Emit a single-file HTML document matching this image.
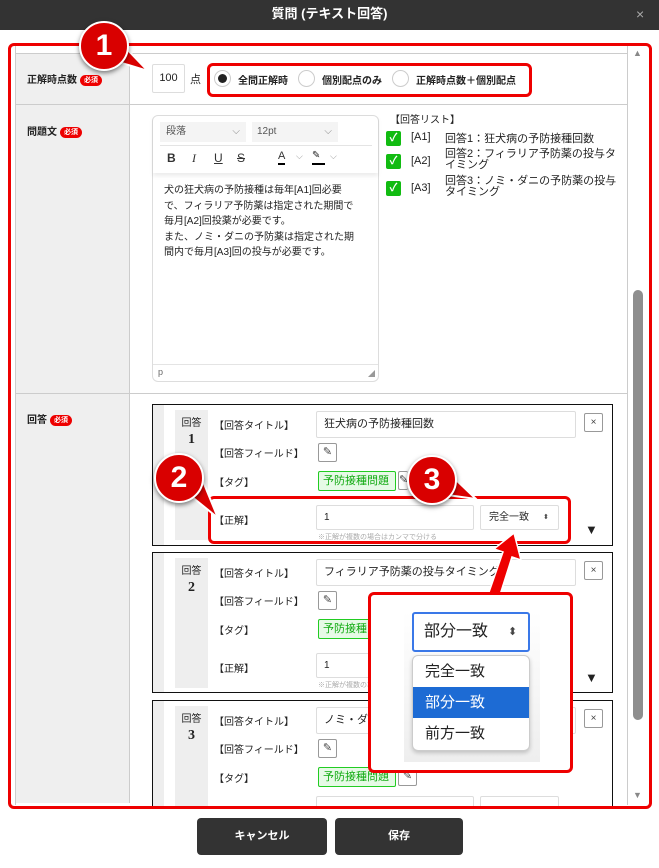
<!DOCTYPE html>
<html><head><meta charset="utf-8"><style>
*{box-sizing:border-box;margin:0;padding:0}
body{width:659px;height:868px;background:#fff;font-family:"Liberation Sans","Noto Sans CJK JP",sans-serif;color:#222;position:relative;overflow:hidden;font-size:11px}
.a{position:absolute}
.hdr{left:0;top:0;width:659px;height:30px;background:#333;color:#fff;font-weight:bold;font-size:13px;text-align:center;line-height:28px}
.lab{font-weight:bold;font-size:10px}
.req{display:inline-block;background:#e00;color:#fff;font-size:7px;border-radius:7px;padding:0 4px;line-height:11px;vertical-align:1px;margin-left:3px}
.rb{border:3px solid #e00;border-radius:6px}
.inp{border:1px solid #ddd;border-radius:2px;background:#fff}
.radio{width:17px;height:17px;border:1px solid #ccc;border-radius:50%;background:#fff}
.card{border:1.5px solid #111;background:#fff}
.pen{width:19px;height:19px;border:1px solid #999;border-radius:2px;background:#fff;font-size:11px;text-align:center;line-height:17px;color:#444}
.tag{border:1px solid #2c2;background:#e6fae6;color:#1a1;font-size:11px;border-radius:2px;padding:0 4px;line-height:18px}
.cb{width:15px;height:15px;background:#1b1;border-radius:2px;color:#fff;font-size:11px;font-weight:bold;text-align:center;line-height:15px}
.circ{width:50px;height:50px;border-radius:50%;background:#d90000;border:2px solid #fff;box-shadow:0 2px 5px rgba(0,0,0,.5);color:#fff;font-size:30px;font-weight:bold;text-align:center;line-height:46px}
.btn{background:#333;color:#fff;border-radius:4px;text-align:center;line-height:37px;font-size:11px;font-weight:bold}
</style></head><body>
<div class="a hdr">質問 (テキスト回答)</div>
<div class="a" style="left:636px;top:6px;color:#aaa;font-size:14px">×</div>

<div class="a" style="left:15px;top:53px;width:115px;height:750px;background:#efefef;border-right:1px solid #ccc"></div>
<div class="a" style="left:15px;top:53px;width:612px;height:1px;background:#ccc"></div>
<div class="a" style="left:15px;top:104px;width:612px;height:1px;background:#ccc"></div>
<div class="a" style="left:15px;top:393px;width:612px;height:1px;background:#ccc"></div>
<div class="a" style="left:15px;top:45px;width:1px;height:760px;background:#ccc"></div>
<div class="a" style="left:627px;top:45px;width:1px;height:760px;background:#ccc"></div>
<div class="a" style="left:629px;top:45px;width:16px;height:760px;background:#fff"></div>
<div class="a" style="left:633px;top:48px;color:#888;font-size:9px">▲</div>
<div class="a" style="left:633px;top:790px;color:#888;font-size:9px">▼</div>
<div class="a" style="left:633px;top:290px;width:10px;height:430px;background:#8e8e8e;border-radius:5px"></div>

<div class="a lab" style="left:27px;top:71px">正解時点数<span class="req">必須</span></div>
<div class="a inp" style="left:152px;top:64px;width:33px;height:29px;text-align:center;line-height:27px;font-size:11px">100</div>
<div class="a" style="left:190px;top:71px;font-size:11px">点</div>
<div class="a radio" style="left:214px;top:70px"><div style="width:9px;height:9px;border-radius:50%;background:#222;margin:3px"></div></div>
<div class="a lab" style="left:238px;top:72px;font-size:10px">全問正解時</div>
<div class="a radio" style="left:298px;top:70px"></div>
<div class="a lab" style="left:322px;top:72px;font-size:10px">個別配点のみ</div>
<div class="a radio" style="left:392px;top:70px"></div>
<div class="a lab" style="left:416px;top:72px;font-size:10px">正解時点数＋個別配点</div>
<div class="a rb" style="left:207px;top:63px;width:325px;height:34px"></div>

<div class="a lab" style="left:27px;top:123px">問題文<span class="req">必須</span></div>
<div class="a" style="left:152px;top:115px;width:227px;height:267px;border:1px solid #ddd;border-radius:6px;background:#fff"></div>
<div class="a" style="left:153px;top:116px;width:225px;height:57px;box-shadow:0 3px 4px rgba(0,0,0,.08)"></div>
<div class="a" style="left:160px;top:122px;width:86px;height:20px;background:#f4f4f4;color:#555;font-size:10px;line-height:20px;padding-left:6px">段落<span style="float:right;margin-right:6px;color:#888">⌵</span></div>
<div class="a" style="left:252px;top:122px;width:86px;height:20px;background:#f4f4f4;color:#555;font-size:10px;line-height:20px;padding-left:5px">12pt<span style="float:right;margin-right:6px;color:#888">⌵</span></div>
<div class="a" style="left:160px;top:145px;width:212px;height:1px;background:#e4e4e4"></div>
<div class="a" style="left:167px;top:151px;font-size:12px;font-weight:bold;color:#333">B</div>
<div class="a" style="left:192px;top:151px;font-size:12px;font-style:italic;font-family:'Liberation Serif',serif;color:#333">I</div>
<div class="a" style="left:214px;top:151px;font-size:12px;text-decoration:underline;color:#333">U</div>
<div class="a" style="left:237px;top:151px;font-size:12px;text-decoration:line-through;color:#333">S</div>
<div class="a" style="left:278px;top:150px;font-size:11px;color:#333;border-bottom:2px solid #000;line-height:13px">A</div>
<div class="a" style="left:296px;top:151px;font-size:9px;color:#999">⌵</div>
<div class="a" style="left:312px;top:150px;width:13px;height:15px;border-bottom:2px solid #000;font-size:10px;color:#222">✎</div>
<div class="a" style="left:330px;top:151px;font-size:9px;color:#999">⌵</div>
<div class="a" style="left:164px;top:183px;white-space:nowrap;font-size:10px;line-height:15.5px;color:#222">犬の狂犬病の予防接種は毎年[A1]回必要<br>で、フィラリア予防薬は指定された期間で<br>毎月[A2]回投薬が必要です。<br>また、ノミ・ダニの予防薬は指定された期<br>間内で毎月[A3]回の投与が必要です。</div>
<div class="a" style="left:153px;top:364px;width:225px;height:1px;background:#e4e4e4"></div>
<div class="a" style="left:158px;top:367px;font-size:9px;color:#666">p</div>
<div class="a" style="left:368px;top:369px;font-size:7px;color:#999">◢</div>

<div class="a" style="left:390px;top:111px;font-size:10px">【回答リスト】</div>
<div class="a cb" style="left:386px;top:131px">✓</div>
<div class="a" style="left:411px;top:131px;font-size:11px">[A1]</div>
<div class="a" style="left:445px;top:130px;font-size:11px">回答1：狂犬病の予防接種回数</div>
<div class="a cb" style="left:386px;top:154px">✓</div>
<div class="a" style="left:411px;top:155px;font-size:11px">[A2]</div>
<div class="a" style="left:445px;top:149px;font-size:11px;line-height:11px;width:172px">回答2：フィラリア予防薬の投与タイミング</div>
<div class="a cb" style="left:386px;top:181px">✓</div>
<div class="a" style="left:411px;top:182px;font-size:11px">[A3]</div>
<div class="a" style="left:445px;top:176px;font-size:11px;line-height:11px;width:172px">回答3：ノミ・ダニの予防薬の投与タイミング</div>

<div class="a lab" style="left:27px;top:411px">回答<span class="req">必須</span></div>

<div class="a card" style="left:152px;top:404px;width:461px;height:142px"><div style="position:absolute;left:0;top:0;width:11px;height:100%;background:#eee"></div></div>
<div class="a" style="left:175px;top:410px;width:33px;height:130px;background:#eee;text-align:center;font-size:10px;padding-top:4px">回答<div style="font-size:14px;font-weight:bold;margin-top:3px;font-family:'Liberation Serif',serif">1</div></div>
<div class="a" style="left:214px;top:417px;font-size:10px">【回答タイトル】</div>
<div class="a inp" style="left:316px;top:411px;width:260px;height:27px;font-size:11px;line-height:25px;padding-left:7px">狂犬病の予防接種回数</div>
<div class="a pen" style="left:584px;top:413px;font-size:10px">×</div>
<div class="a" style="left:214px;top:445px;font-size:10px">【回答フィールド】</div>
<div class="a pen" style="left:318px;top:443px">✎</div>
<div class="a" style="left:214px;top:474px;font-size:10px">【タグ】</div>
<div class="a tag" style="left:318px;top:471px;width:78px">予防接種問題</div>
<div class="a pen" style="left:398px;top:471px;width:10px;border-right:none">✎</div>
<div class="a" style="left:214px;top:512px;font-size:10px">【正解】</div>
<div class="a inp" style="left:316px;top:505px;width:158px;height:25px;font-size:10px;line-height:23px;padding-left:7px">1</div>
<div class="a inp" style="left:480px;top:505px;width:79px;height:25px;font-size:10px;line-height:23px;padding-left:8px">完全一致<span style="position:absolute;left:62px;font-size:7px;color:#444">⬍</span></div>
<div class="a" style="left:318px;top:532px;font-size:7px;color:#aaa">※正解が複数の場合はカンマで分ける</div>
<div class="a" style="left:585px;top:522px;font-size:13px">▼</div>
<div class="a rb" style="left:208px;top:496px;width:363px;height:48px"></div>

<div class="a card" style="left:152px;top:552px;width:461px;height:141px"><div style="position:absolute;left:0;top:0;width:11px;height:100%;background:#eee"></div></div>
<div class="a" style="left:175px;top:558px;width:33px;height:130px;background:#eee;text-align:center;font-size:10px;padding-top:4px">回答<div style="font-size:14px;font-weight:bold;margin-top:3px;font-family:'Liberation Serif',serif">2</div></div>
<div class="a" style="left:214px;top:565px;font-size:10px">【回答タイトル】</div>
<div class="a inp" style="left:316px;top:559px;width:260px;height:27px;font-size:11px;line-height:25px;padding-left:7px">フィラリア予防薬の投与タイミング</div>
<div class="a pen" style="left:584px;top:561px;font-size:10px">×</div>
<div class="a" style="left:214px;top:593px;font-size:10px">【回答フィールド】</div>
<div class="a pen" style="left:318px;top:591px">✎</div>
<div class="a" style="left:214px;top:622px;font-size:10px">【タグ】</div>
<div class="a tag" style="left:318px;top:619px;width:78px">予防接種問題</div>
<div class="a" style="left:214px;top:660px;font-size:10px">【正解】</div>
<div class="a inp" style="left:316px;top:653px;width:158px;height:25px;font-size:10px;line-height:23px;padding-left:7px">1</div>
<div class="a" style="left:318px;top:680px;font-size:7px;color:#aaa">※正解が複数の場合はカンマで分ける</div>
<div class="a" style="left:585px;top:670px;font-size:13px">▼</div>

<div class="a card" style="left:152px;top:700px;width:461px;height:120px"><div style="position:absolute;left:0;top:0;width:11px;height:100%;background:#eee"></div></div>
<div class="a" style="left:175px;top:706px;width:33px;height:100px;background:#eee;text-align:center;font-size:10px;padding-top:4px">回答<div style="font-size:14px;font-weight:bold;margin-top:3px;font-family:'Liberation Serif',serif">3</div></div>
<div class="a" style="left:214px;top:713px;font-size:10px">【回答タイトル】</div>
<div class="a inp" style="left:316px;top:707px;width:260px;height:27px;font-size:11px;line-height:25px;padding-left:7px">ノミ・ダニの予防薬の投与タイミング</div>
<div class="a pen" style="left:584px;top:709px;font-size:10px">×</div>
<div class="a" style="left:214px;top:741px;font-size:10px">【回答フィールド】</div>
<div class="a pen" style="left:318px;top:739px">✎</div>
<div class="a" style="left:214px;top:770px;font-size:10px">【タグ】</div>
<div class="a tag" style="left:318px;top:767px;width:78px">予防接種問題</div>
<div class="a pen" style="left:398px;top:767px">✎</div>
<div class="a inp" style="left:316px;top:796px;width:158px;height:25px"></div>
<div class="a inp" style="left:480px;top:796px;width:79px;height:25px"></div>

<div class="a" style="left:0;top:808px;width:659px;height:60px;background:#fff"></div>
<div class="a" style="left:0;top:30px;width:659px;height:13px;background:#fff"></div>
<div class="a" style="left:0;top:43px;width:9px;height:770px;background:#fff"></div>
<div class="a" style="left:649px;top:43px;width:10px;height:770px;background:#fff"></div>
<div class="a rb" style="left:8px;top:43px;width:644px;height:766px"></div>

<svg class="a" style="left:0;top:0" width="659" height="868"><polygon points="488,595 503,552 494,549 514,533 521,560 512,557 499,598" fill="#e00" stroke="#fff" stroke-width="1.5"/></svg>
<div class="a rb" style="left:368px;top:592px;width:205px;height:181px;background:#fff"></div>
<div class="a" style="left:404px;top:612px;width:136px;height:150px;background:linear-gradient(#fff,#eee)"></div>
<div class="a" style="left:412px;top:612px;width:118px;height:40px;border:2px solid #3a78e8;border-radius:3px;background:#fff;font-size:16px;line-height:36px;padding-left:10px">部分一致<span style="position:absolute;left:94px;font-size:11px;color:#444">⬍</span></div>
<div class="a" style="left:412px;top:655px;width:118px;height:96px;border:1px solid #ccc;border-radius:6px;background:#fff;box-shadow:0 2px 4px rgba(0,0,0,.2);overflow:hidden;font-size:15px">
<div style="height:31px;line-height:31px;padding-left:12px">完全一致</div>
<div style="height:31px;line-height:31px;padding-left:12px;background:#1d6bd4;color:#fff">部分一致</div>
<div style="height:32px;line-height:32px;padding-left:12px">前方一致</div></div>

<svg class="a" style="left:0;top:0" width="659" height="868">
<g fill="#d90000" stroke="#fff" stroke-width="2"><polygon points="112,60 148,71 122,44"/><polygon points="186,492 218,518 200,474"/><polygon points="440,494 476,499 452,476"/></g></svg>
<div class="a circ" style="left:79px;top:21px">1</div>
<div class="a circ" style="left:154px;top:453px">2</div>
<div class="a circ" style="left:407px;top:455px">3</div>

<div class="a btn" style="left:197px;top:818px;width:130px;height:37px">キャンセル</div>
<div class="a btn" style="left:335px;top:818px;width:128px;height:37px">保存</div>
</body></html>
